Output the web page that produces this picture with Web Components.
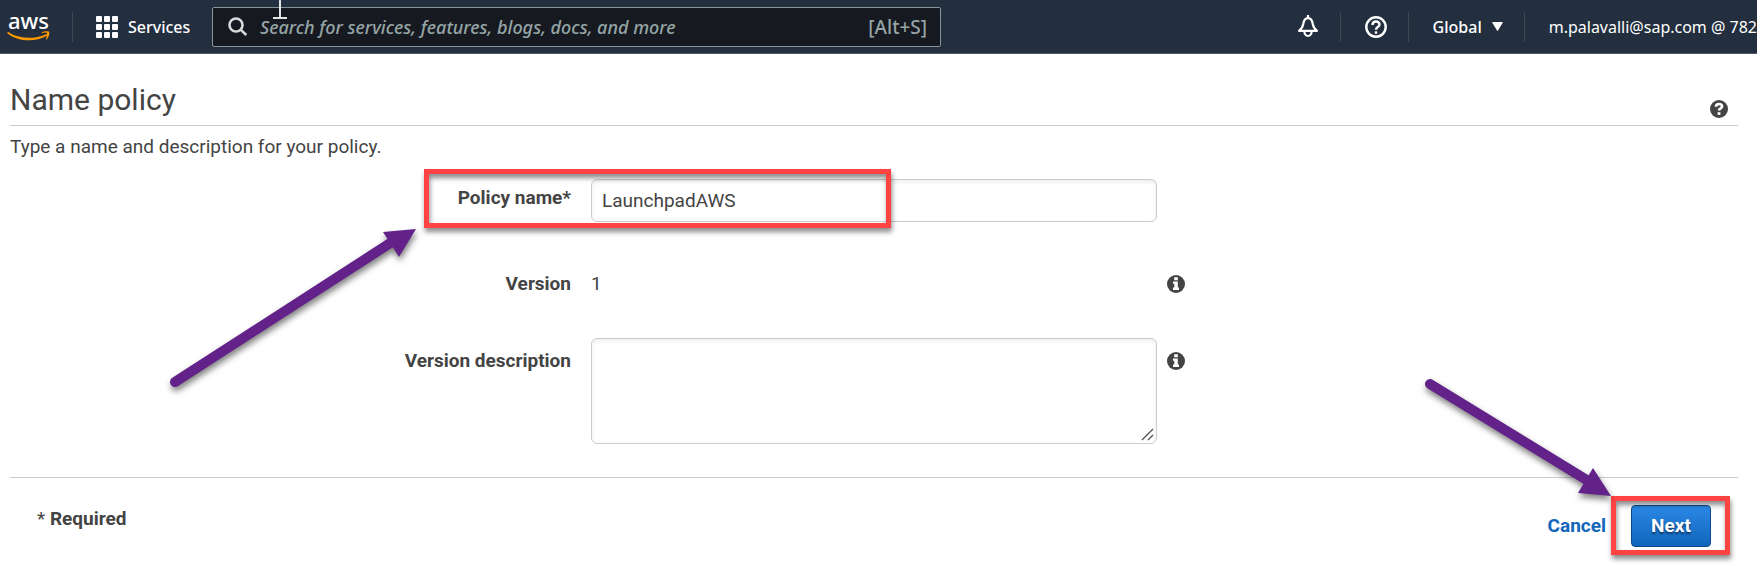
<!DOCTYPE html>
<html lang="en">
<head>
<meta charset="utf-8">
<meta name="viewport" content="width=device-width, initial-scale=1">
<title>Name policy</title>
<style>
  body { margin: 0; background: #fff; color: #444; font: 19px/24px Roboto, "Liberation Sans", sans-serif; }
</style>
</head>
<body>
<console-header></console-header>
<policy-page></policy-page>

<script>
const define = (name, html) => {
  const template = document.createElement('template');
  template.innerHTML = html;
  customElements.define(name, class extends HTMLElement {
    constructor() {
      super();
      this.attachShadow({ mode: 'open' }).append(template.content.cloneNode(true));
    }
  });
};

define('aws-logo', `
<style>
  :host { display: block; width: 44px; flex: none; }
  a { display: block; color: #fff; text-decoration: none; font: 500 22px/18px "Noto Sans", sans-serif; }
  span { display: block; padding: 0 0 2px 1px; }
  svg { display: block; }
</style>
<a href="#"><span>aws</span>
<svg width="44" height="12" viewBox="0 0 44 12" fill="#ff9900" aria-hidden="true">
  <path d="M.4 1.600C.8.900 1.400 1 2 1.400 13 8 27 8.400 38.500 3.400c1.500-.6 2.300.7 1 1.700C28.500 11.200 11.500 11 .8 2.700c-.4-.4-.6-.7-.4-1.100z"/>
  <path d="M34.500 1.700C36.500 0 41-.2 42 .6c.8.9.2 5.400-2.400 7.800-.4.400-.9.200-.7-.3.800-2 1.500-5 .9-6-.6-.9-3.300-.3-4.900 0-.6.100-.7-.2-.4-.4z"/>
</svg></a>`);

define('search-box', `
<style>
  :host { display: block; }
  div { display: flex; align-items: center; box-sizing: border-box; height: 40px; padding: 0 13px 0 15px;
        border: 1px solid #879596; border-radius: 2px; background: #16191f; color: #95a5a6; font-size: 18px; line-height: 24px; }
  svg { flex: none; margin-right: 12px; }
  input { flex: 1; min-width: 0; padding: 0; border: 0; outline: 0; background: none; color: #fff; font: inherit; }
  input::placeholder { color: #95a5a6; font-style: italic; opacity: 1; }
  span { font-size: 19px; }
</style>
<div role="search">
  <svg width="20" height="20" viewBox="0 0 20 20" fill="none" stroke="#d5dbdb" stroke-width="2.600" aria-hidden="true"><circle cx="8" cy="8" r="6.500"/><path d="M12.600 12.600l5.700 5.400"/></svg>
  <input type="search" aria-label="Search" placeholder="Search for services, features, blogs, docs, and more">
  <span>[Alt+S]</span>
</div>`);

define('nav-divider', `
<style>:host { display: block; flex: none; width: 1px; height: 30px; background: #414750; }</style>`);

define('nav-button', `
<style>
  :host { display: block; flex: none; }
  button { display: flex; align-items: center; gap: 10px; padding: 0; border: 0; background: none; color: #fff;
           font: inherit; white-space: nowrap; cursor: pointer; }
</style>
<button type="button"><slot></slot></button>`);

define('console-header', `
<style>
  :host { display: flex; align-items: center; position: relative; overflow: hidden; box-sizing: border-box; height: 54px;
          padding-left: 7px; border-bottom: 1px solid #545b64; background: #232f3e; color: #fff;
          font: 500 16px/24px "Noto Sans", "Open Sans", sans-serif; }
  svg { display: block; }
  aws-logo { margin-right: 21px; }
  .services { margin-left: 23px; width: 116px; }
  search-box { flex: 0 1 729px; }
  .right { display: flex; align-items: center; margin-left: auto; padding-left: 24px; }
  .right nav-divider { margin: 0 24px 0 21px; }
  .account { font-weight: 400; }
  .pointer { position: absolute; left: 273px; top: 0; }
</style>
<aws-logo></aws-logo>
<nav-divider></nav-divider>
<nav-button class="services">
  <svg width="22" height="22" viewBox="0 0 22 22" fill="#fff" aria-hidden="true"><g id="r"><rect width="6" height="6" rx="1"/><rect x="8" width="6" height="6" rx="1"/><rect x="16" width="6" height="6" rx="1"/></g><use href="#r" y="8"/><use href="#r" y="16"/></svg>
  Services
</nav-button>
<search-box></search-box>
<div class="right">
  <nav-button><svg width="22" height="23" viewBox="0 0 22 23" fill="none" stroke="#fff" stroke-width="2.200" role="img" aria-label="Notifications"><path d="M11 0v3M2 15.800h18c-2.500-2-3.800-3.600-4.300-7C15.200 5 13.800 3.100 11 3.100S6.800 5 6.300 8.800c-.5 3.400-1.800 5-4.300 7z" stroke-linejoin="round"/><path d="M7.400 16.500a3.600 4.500 0 0 0 7.200 0"/></svg></nav-button>
  <nav-divider></nav-divider>
  <nav-button><svg width="22" height="22" viewBox="0 0 22 22" fill="none" stroke="#fff" stroke-width="2.400" role="img" aria-label="Support"><circle cx="11" cy="11" r="9.700"/><path d="M7.500 9c0-4.600 7-4.500 7-.6 0 2.400-3.500 2.600-3.500 5.300"/><path d="M11 15.300v2.500"/></svg></nav-button>
  <nav-divider></nav-divider>
  <nav-button>Global<svg width="11" height="9" viewBox="0 0 11 9" fill="#fff" aria-hidden="true"><path d="M.8 0h9.400q.8 0 .5.700L6 8.600q-.5.600-1 0L.3.700Q0 0 .8 0z"/></svg></nav-button>
  <nav-divider></nav-divider>
  <nav-button class="account">m.palavalli@sap.com @ 782</nav-button>
</div>
<svg class="pointer" width="14" height="19" viewBox="0 0 14 19" fill="#e4e4e4" aria-hidden="true"><path d="M6 0h2v17h6v2H0v-2h6z"/></svg>`);

define('badge-icon', `
<style>
  :host { display: block; width: 18px; height: 18px; flex: none; }
  button { display: block; padding: 0; border: 0; background: none; cursor: pointer; }
  svg { display: block; }
  :host([kind="info"]) .help, :host([kind="help"]) .info { display: none; }
</style>
<button type="button" aria-label="More information">
<svg width="18" height="18" viewBox="0 0 18 18" aria-hidden="true">
  <circle cx="9" cy="9" r="9" fill="#444"/>
  <path class="info" fill="#fff" d="M7.200 2.300h3.600v2.900H7.200zM6 6.600h4.800v6H12V15H6v-2.400h1.300V8.800H6z"/>
  <g class="help" fill="none" stroke="#fff"><path stroke-width="2.600" d="M5.900 6.800C6 3 12.100 3.200 12.100 6.400c0 2-3.100 2-3.100 4.200"/><path stroke-width="2.800" d="M9 12.200v2.700"/></g>
</svg></button>`);

define('callout-arrow', `
<style>
  :host { display: block; pointer-events: none; }
  svg { display: block; overflow: visible; filter: drop-shadow(1px 4px 3px rgba(0,0,0,.5)); }
  :host([toward="up"]) .down, :host([toward="down"]) .up { display: none; }
</style>
<svg width="1" height="1" fill="#632289" stroke="#632289" aria-hidden="true">
  <g class="up"><path d="M0 0L220-142" stroke-width="10" stroke-linecap="round"/><path stroke="none" d="M241-153l-33 3 16 25z"/></g>
  <g class="down"><path d="M0 0L160 98" stroke-width="10" stroke-linecap="round"/><path stroke="none" d="M181 112l-33-3 15-25z"/></g>
</svg>`);

define('callout-frame', `
<style>
  :host { display: block; box-sizing: border-box; border: 5px solid #ff4343; pointer-events: none;
          box-shadow: 1px 4px 5px rgba(0,0,0,.45), inset 1px 4px 5px rgba(0,0,0,.45); }
</style>`);

define('form-row', `
<style>
  :host { display: grid; grid-template-columns: 561fr 20fr 566fr 10fr 571fr; align-items: start; }
  .label { grid-column: 1; text-align: right; font-weight: 700; }
  .field { grid-column: 3; position: relative; }
  .hint { grid-column: 5; }
</style>
<div class="label"><slot name="label"></slot></div>
<div class="field"><slot name="field"></slot></div>
<div class="hint"><slot name="hint"></slot></div>`);

define('policy-form', `
<style>
  :host { display: block; padding-top: 20px; }
  form-row { min-height: 43px; }
  label, .name, .value { display: block; padding-top: 7px; }
  .description label { padding-top: 11px; }
  badge-icon { margin-top: 10px; }
  .description badge-icon { margin-top: 14px; }
  input, textarea { display: block; box-sizing: border-box; width: 100%; margin: 0; border: 1px solid #ccc; border-radius: 6px;
    background: #fff; color: #444; font: 19px/24px Roboto, "Liberation Sans", sans-serif; box-shadow: inset 0 2px 4px rgba(0,0,0,.08); outline: 0; }
  input { height: 43px; padding: 0 10px; }
  textarea { height: 106px; padding: 8px 10px; resize: none; }
  .grip { position: absolute; right: 3px; bottom: 3px; pointer-events: none; }
  .version { margin: 43px 0 30px; }
  callout-frame { position: absolute; left: -167px; top: -10px; width: 467px; height: 59px; }
  callout-arrow { position: absolute; left: -416px; top: 203px; }
</style>
<form-row>
  <label slot="label" for="policy">Policy name*</label>
  <input slot="field" id="policy" type="text" value="LaunchpadAWS">
  <callout-frame slot="field"></callout-frame>
  <callout-arrow slot="field" toward="up"></callout-arrow>
</form-row>
<form-row class="version">
  <span slot="label" class="name">Version</span>
  <div slot="field" class="value">1</div>
  <badge-icon slot="hint" kind="info"></badge-icon>
</form-row>
<form-row class="description">
  <label slot="label" for="description">Version description</label>
  <textarea slot="field" id="description"></textarea>
  <svg slot="field" class="grip" width="13" height="13" viewBox="0 0 13 13" fill="none" stroke="#555" stroke-width="1.400" aria-hidden="true"><path d="M1 12L12 1M7 12l5-5"/></svg>
  <badge-icon slot="hint" kind="info"></badge-icon>
</form-row>`);

define('form-actions', `
<style>
  :host { display: flex; justify-content: space-between; margin-top: 33px; padding: 27px 27px 18px; border-top: 1px solid #ccc; }
  .required { padding-top: 2px; }
  .buttons { display: flex; align-items: center; gap: 25px; }
  a { color: #1166bb; font-weight: 700; text-decoration: none; }
  .next { position: relative; }
  button { display: block; box-sizing: border-box; width: 80px; height: 42px; padding: 0; border: 1px solid #0a4a8a; border-radius: 4px;
    background: linear-gradient(#2b88e6, #1166bb); color: #fff; font: 700 19px/24px Roboto, "Liberation Sans", sans-serif;
    text-shadow: 0 2px 2px rgba(0,0,0,.5); cursor: pointer; }
  callout-frame { position: absolute; left: -20px; top: -9px; width: 119px; height: 59px; }
  callout-arrow { position: absolute; left: -201px; top: -121px; }
</style>
<div class="required">* <b>Required</b></div>
<div class="buttons">
  <a href="#">Cancel</a>
  <div class="next"><button type="button">Next</button><callout-frame></callout-frame><callout-arrow toward="down"></callout-arrow></div>
</div>`);

define('policy-page', `
<style>
  :host { display: block; margin: 0 19px 0 10px; }
  header { display: flex; align-items: flex-end; justify-content: space-between; padding: 26px 10px 5px 0; border-bottom: 1px solid #ccc; }
  h1 { margin: 0; font-size: 30px; line-height: 40px; font-weight: 400; }
  badge-icon { margin-bottom: 2px; }
  p { margin: 9px 0 0; }
</style>
<main>
  <header><h1>Name policy</h1><badge-icon kind="help"></badge-icon></header>
  <p>Type a name and description for your policy.</p>
  <policy-form></policy-form>
  <form-actions></form-actions>
</main>`);
</script>
</body>
</html>
